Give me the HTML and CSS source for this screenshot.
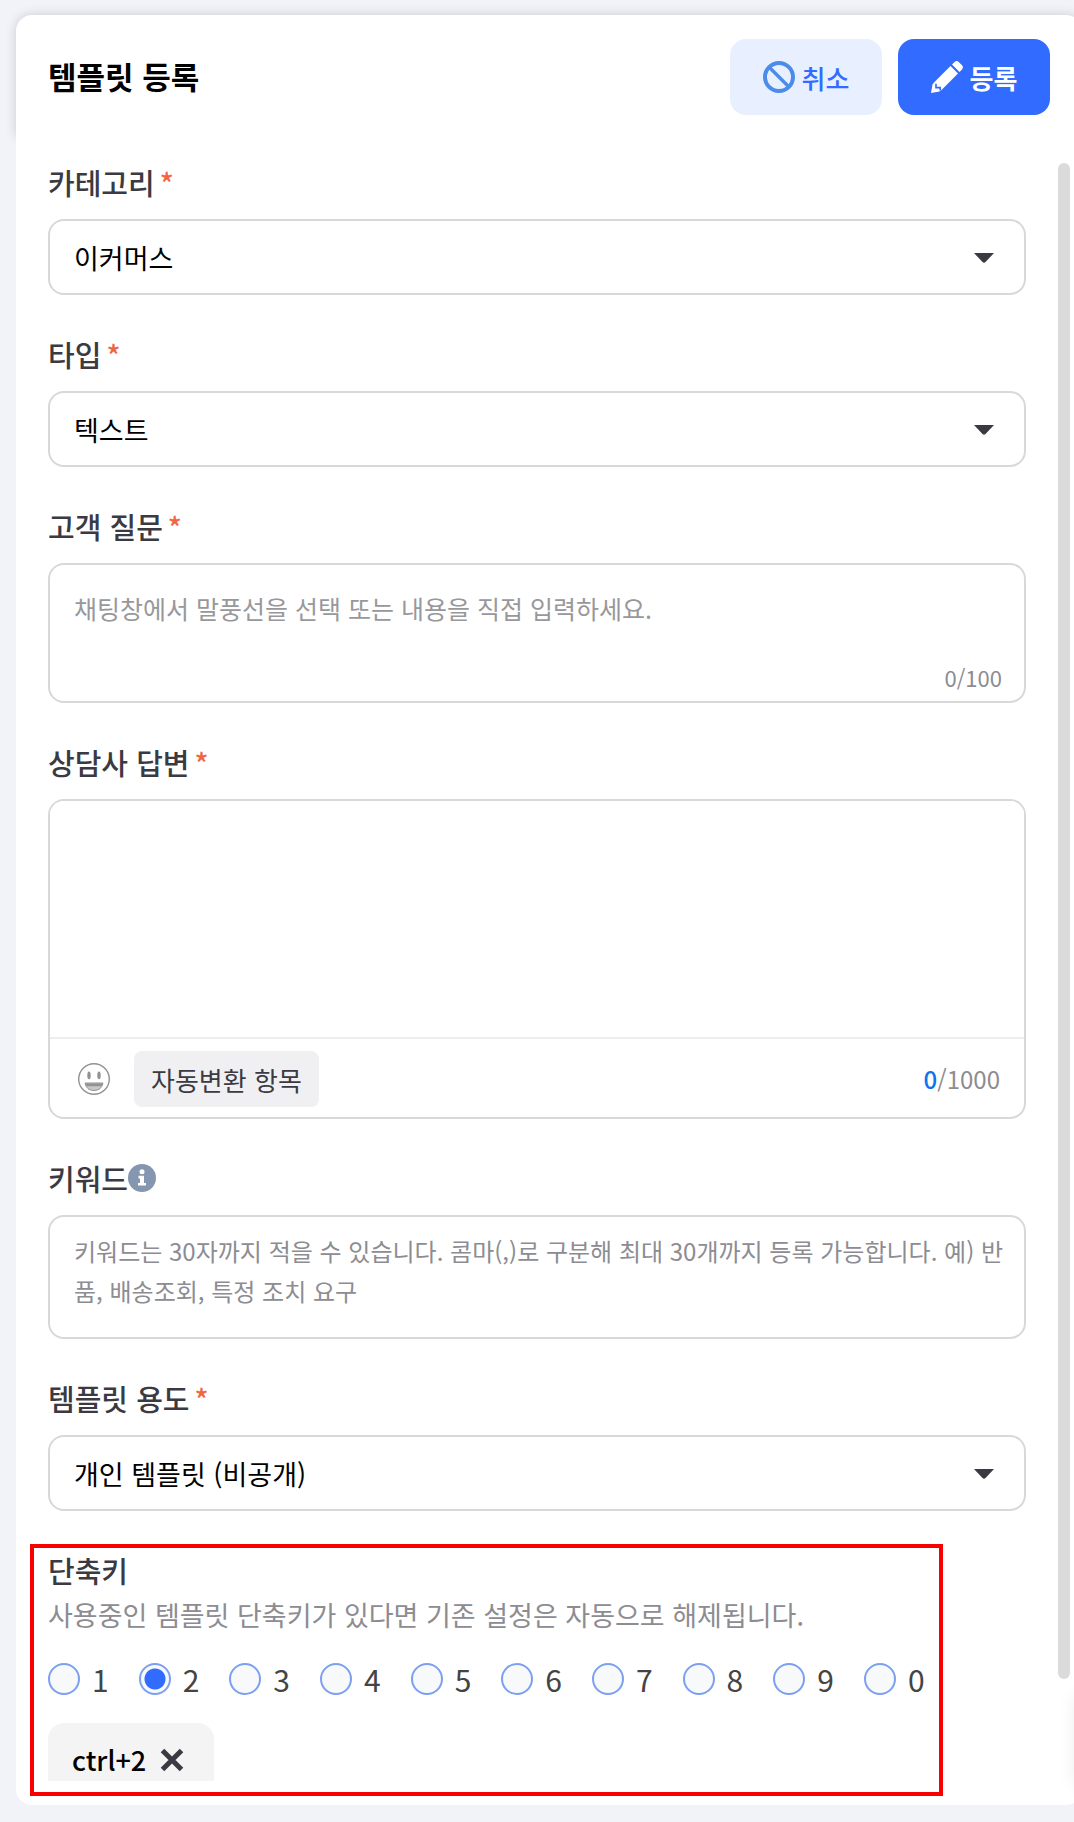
FILE: index.html
```html
<!DOCTYPE html>
<html lang="ko">
<head>
<meta charset="utf-8">
<meta name="viewport" content="width=device-width, initial-scale=1">
<title>템플릿 등록</title>
<link rel="stylesheet" href="styles.css">
</head>
<body>
<main class="panel">
  <header class="panel-header">
    <h1 class="panel-title">템플릿 등록</h1>
    <div class="actions">
      <button class="btn btn-cancel" type="button">
        <svg class="btn-icon" viewBox="0 0 32 32" aria-hidden="true"><circle cx="16" cy="16" r="14" fill="none" stroke="#4b8bea" stroke-width="4"/><path d="M6.500 6.500l19 19" stroke="#4b8bea" stroke-width="3.400"/></svg>
        취소
      </button>
      <button class="btn btn-submit" type="submit" form="template-form">
        <svg class="btn-icon" viewBox="0 0 32 32" aria-hidden="true"><path fill="#fff" d="M19.500 5l7.500 7.500L11 28.500 8.500 30.500 0 32l1.500-8.500L3.500 21z"/><path fill="#fff" d="M21 3.500l2.300-2.300q2.400-2.200 4.600 0l2.900 2.900q2.200 2.200 0 4.600L28.500 11z"/><path fill="none" stroke="#326bff" stroke-width="1.600" d="M5 22.800v3.800h4.200v3"/></svg>
        등록
      </button>
    </div>
  </header>

  <div class="panel-body">
    <form class="form" id="template-form">
      <div class="field">
        <label class="label" for="category">카테고리<span class="required">*</span></label>
        <div class="select-wrap">
          <select class="box select" id="category"><option>이커머스</option></select>
          <svg class="caret" viewBox="0 0 20 10" aria-hidden="true"><path d="M0 0h20L11.500 9q-1.500 1.600-3 0z" fill="#3b3a42"/></svg>
        </div>
      </div>

      <div class="field">
        <label class="label" for="type">타입<span class="required">*</span></label>
        <div class="select-wrap">
          <select class="box select" id="type"><option>텍스트</option></select>
          <svg class="caret" viewBox="0 0 20 10" aria-hidden="true"><path d="M0 0h20L11.500 9q-1.500 1.600-3 0z" fill="#3b3a42"/></svg>
        </div>
      </div>

      <div class="field">
        <label class="label" for="question">고객 질문<span class="required">*</span></label>
        <div class="box question">
          <textarea class="area question-area" id="question" maxlength="100" placeholder="채팅창에서 말풍선을 선택 또는 내용을 직접 입력하세요."></textarea>
          <span class="count count-small">0/100</span>
        </div>
      </div>

      <div class="field">
        <label class="label" for="answer">상담사 답변<span class="required">*</span></label>
        <div class="box answer">
          <textarea class="area answer-area" id="answer" maxlength="1000"></textarea>
          <div class="toolbar">
            <button class="emoji" type="button" aria-label="이모지">
              <svg viewBox="0 0 32 32" width="32" height="32" aria-hidden="true"><circle cx="16" cy="16" r="15.300" fill="none" stroke="#929292" stroke-width="1.400"/><ellipse cx="11" cy="12.400" rx="1.700" ry="3.800" fill="#929292"/><ellipse cx="21" cy="12.400" rx="1.700" ry="3.800" fill="#929292"/><path d="M7 20h18q-1.500 7.500-9 7.500T7 20z" fill="#c8c8c8" stroke="#929292"/><path d="M7.500 20.500h17l-1 2.800h-15z" fill="#929292"/></svg>
            </button>
            <button class="auto" type="button">자동변환 항목</button>
            <span class="count"><b class="count-now">0</b>/1000</span>
          </div>
        </div>
      </div>

      <div class="field">
        <label class="label" for="keyword">키워드<svg class="info" viewBox="0 0 28 28" aria-hidden="true"><circle cx="14" cy="14" r="14" fill="#8496b0"/><circle cx="14" cy="7.800" r="2.500" fill="#fff"/><path d="M10.500 11.800h5.500v7.200h2v2.600h-8v-2.600h2v-4.600h-1.500z" fill="#fff"/></svg></label>
        <textarea class="box area keyword" id="keyword" placeholder="키워드는 30자까지 적을 수 있습니다. 콤마(,)로 구분해 최대 30개까지 등록 가능합니다. 예) 반품, 배송조회, 특정 조치 요구"></textarea>
      </div>

      <div class="field">
        <label class="label" for="usage">템플릿 용도<span class="required">*</span></label>
        <div class="select-wrap">
          <select class="box select" id="usage"><option>개인 템플릿 (비공개)</option></select>
          <svg class="caret" viewBox="0 0 20 10" aria-hidden="true"><path d="M0 0h20L11.500 9q-1.500 1.600-3 0z" fill="#3b3a42"/></svg>
        </div>
      </div>

      <div class="shortcut" role="radiogroup" aria-labelledby="shortcut-title">
        <h2 class="label shortcut-title" id="shortcut-title">단축키</h2>
        <p class="shortcut-help">사용중인 템플릿 단축키가 있다면 기존 설정은 자동으로 해제됩니다.</p>
        <div class="keys">
          <label class="key"><input class="radio" type="radio" name="key">1</label>
          <label class="key"><input class="radio" type="radio" name="key" checked>2</label>
          <label class="key"><input class="radio" type="radio" name="key">3</label>
          <label class="key"><input class="radio" type="radio" name="key">4</label>
          <label class="key"><input class="radio" type="radio" name="key">5</label>
          <label class="key"><input class="radio" type="radio" name="key">6</label>
          <label class="key"><input class="radio" type="radio" name="key">7</label>
          <label class="key"><input class="radio" type="radio" name="key">8</label>
          <label class="key"><input class="radio" type="radio" name="key">9</label>
          <label class="key"><input class="radio" type="radio" name="key">0</label>
        </div>
        <div class="chip">
          ctrl+2
          <button class="chip-remove" type="button" aria-label="단축키 삭제">
            <svg viewBox="0 0 24 24" width="24" height="24" aria-hidden="true"><path d="M2.500 2.500l19 19M21.500 2.500l-19 19" stroke="#3b3a42" stroke-width="5"/></svg>
          </button>
        </div>
      </div>
    </form>
    <div class="scroll-track" aria-hidden="true"><div class="scroll-thumb"></div></div>
  </div>
</main>
</body>
</html>
```
FILE: styles.css
```css
* {
  box-sizing: border-box;
}

body {
  margin: 0;
  background: #f1f3f8;
  color: #3b3a42;
  font-family: "Noto Sans CJK KR", "Noto Sans", sans-serif;
  font-size: 27px;
  overflow-x: hidden;
}

button,
select,
textarea {
  font-family: inherit;
  margin: 0;
}

.panel {
  margin: 15px -8px 16px 16px;
}

.panel-header {
  display: flex;
  align-items: flex-start;
  justify-content: space-between;
  height: 122px;
  padding: 24px 32px 0;
  background: #fff;
  border-radius: 16px 16px 0 0;
  box-shadow: 0 0 12px rgba(0, 0, 0, 0.16);
}

.panel-title {
  margin: 0;
  color: #000;
  font-size: 31px;
  font-weight: 700;
  line-height: 74px;
}

.actions {
  display: flex;
  gap: 16px;
}

.btn {
  display: flex;
  align-items: center;
  justify-content: center;
  gap: 7px;
  width: 152px;
  height: 76px;
  padding: 0;
  border: 0;
  border-radius: 16px;
  font-size: 26px;
}

.btn-cancel {
  background: #e8efff;
  color: #326bff;
  font-weight: 500;
}

.btn-submit {
  background: #326bff;
  color: #fff;
  font-weight: 700;
}

.btn-icon {
  width: 32px;
  height: 32px;
}

.panel-body {
  position: relative;
  display: flex;
  gap: 32px;
  padding: 26px 12px 24px 32px;
  background: #fff;
  border-radius: 0 0 16px 16px;
  overflow: hidden;
}

/* soft shade at the lower right edge of the panel */
.panel-body::after {
  content: "";
  position: absolute;
  right: -4px;
  bottom: 24px;
  width: 4px;
  height: 80px;
  box-shadow: 0 0 20px 4px rgba(0, 0, 0, 0.12);
}

.form {
  display: flex;
  flex: 1;
  flex-direction: column;
  gap: 40px;
  min-width: 0;
}

.field {
  display: flex;
  flex-direction: column;
  gap: 16px;
}

.label {
  display: flex;
  align-items: center;
  height: 40px;
  padding-bottom: 2px;
  font-size: 29px;
  font-weight: 500;
  line-height: 38px;
}

.required {
  margin-left: 5px;
  color: #f26542;
}

.info {
  width: 28px;
  height: 28px;
}

.box {
  width: 100%;
  background: #fff;
  border: 2px solid #d8d8d8;
  border-radius: 16px;
}

.select-wrap {
  position: relative;
}

.select {
  display: block;
  height: 76px;
  padding: 0 72px 0 24px;
  appearance: none;
  color: #000;
  font-size: 27px;
}

.caret {
  position: absolute;
  top: 34px;
  right: 32px;
  width: 20px;
  height: 10px;
  pointer-events: none;
}

.area {
  display: block;
  resize: none;
  outline: 0;
  color: #000;
}

.area::placeholder {
  color: #98989c;
  opacity: 1;
}

.question {
  display: flex;
  flex-direction: column;
  height: 140px;
  padding: 24px 22px 8px 24px;
}

.question-area {
  flex: 1;
  width: 100%;
  padding: 0;
  border: 0;
  font-size: 25px;
  line-height: 38px;
}

.answer {
  overflow: hidden;
}

.answer-area {
  width: 100%;
  height: 236px;
  padding: 24px;
  border: 0;
  font-size: 25px;
}

.toolbar {
  display: flex;
  align-items: center;
  height: 80px;
  padding: 2px 24px 0 28px;
  border-top: 2px solid #eee;
}

.emoji {
  display: flex;
  margin-right: 24px;
  padding: 0;
  border: 0;
  background: none;
}

.auto {
  height: 56px;
  padding: 0 17px;
  border: 0;
  border-radius: 8px;
  background: #f0f0f3;
  color: #3b3a42;
  font-size: 26px;
}

.count {
  margin-left: auto;
  color: #8c8c92;
  font-size: 24px;
  line-height: 32px;
}

.count-small {
  font-size: 22px;
}

.count-now {
  color: #0b74ee;
  font-weight: 500;
}

.keyword {
  height: 124px;
  padding: 14px 16px 14px 24px;
  font-size: 24px;
  line-height: 40px;
  word-break: break-all;
}

.keyword::placeholder {
  color: #8c8c92;
}

.shortcut {
  position: relative;
  align-self: flex-start;
}

/* highlight frame round the shortcut settings */
.shortcut::after {
  content: "";
  position: absolute;
  inset: -7px -18px -15px;
  border: 4px solid #f80000;
  pointer-events: none;
}

.shortcut-title {
  margin: 0;
}

.shortcut-help {
  margin: 4px 0 28px;
  color: #8c8c92;
  font-size: 27px;
  line-height: 40px;
}

.keys {
  display: flex;
  gap: 30px;
}

.key {
  display: flex;
  align-items: center;
  gap: 12px;
  color: #444;
  font-size: 30px;
  line-height: 32px;
}

.radio {
  width: 32px;
  height: 32px;
  margin: 0;
  appearance: none;
  background: #f8f9fb;
  border: 2px solid #7c9ff0;
  border-radius: 50%;
}

.radio:checked {
  background: radial-gradient(circle, #326bff 10px, #f8f9fb 11px);
}

.chip {
  display: flex;
  align-items: center;
  gap: 14px;
  width: max-content;
  height: 58px;
  margin-top: 28px;
  padding: 16px 30px 0 24px;
  border-radius: 16px 16px 0 0;
  background: #f4f4f4;
  color: #000;
  font-size: 27px;
  font-weight: 500;
  line-height: 38px;
}

.chip-remove {
  display: flex;
  padding: 0;
  border: 0;
  background: none;
}

.scroll-track {
  width: 12px;
}

.scroll-thumb {
  height: calc(100% - 102px);
  border-radius: 6px;
  background: #dbdbdb;
}
```
